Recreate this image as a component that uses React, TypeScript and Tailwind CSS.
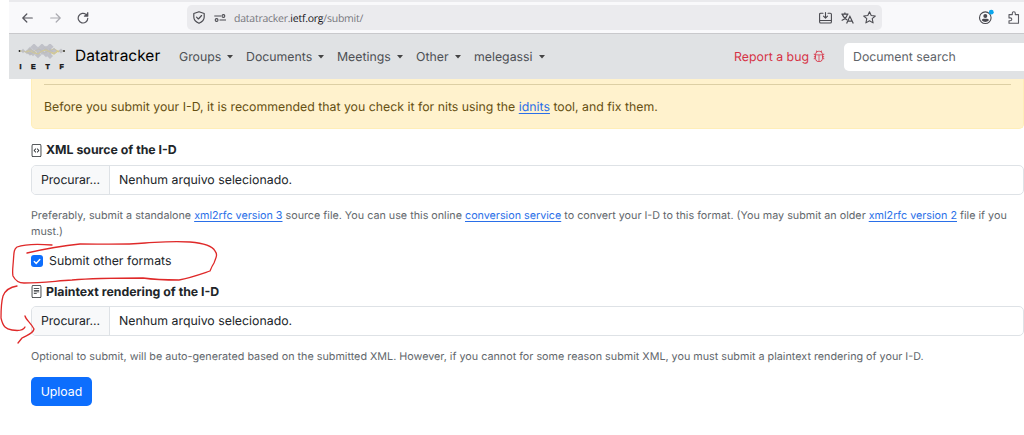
import React from "react";
import { BsBug, BsFileCode, BsFileText } from "react-icons/bs";

const link = "text-[#2a6fe8] underline decoration-1 underline-offset-2";

function Logo() {
  const diamonds: [number, number, number][] = [
    [5, 7, 2.2], [9, 8, 2.2], [12, 5.5, 2.8], [12, 9, 2.8], [16, 3, 3.6], [15, 9, 3.4],
    [20, 6, 3.6], [20, 11, 3.4], [24, 3, 3.6], [24, 8, 3],
    [28, 5, 3.4], [28, 10, 3.4], [32, 2.8, 3.6], [32, 7.5, 3.4], [32, 12, 3], [36, 7, 3.2], [43, 7, 2.6],
  ];
  return (
    <svg width="48" height="26" viewBox="0 0 48 26" className="shrink-0">
      <path d="M1 7H5L8 8L12 5L16 8L20 10L24 7L28 5L32 8L36 10L40 7H47M8 8L13 10L17 7L21 5L26 9L31 7L36 5L41 8" fill="none" stroke="#d8cb85" strokeWidth="1.2" />
      {diamonds.map(([x, y, r], i) => (
        <rect key={i} x={x - r * 0.7} y={y - r * 0.7} width={r * 1.4} height={r * 1.4} fill="#babbc3" fillOpacity="0.85" transform={`rotate(45 ${x} ${y})`} />
      ))}
      <path d="M8 8L12 7L16 9L20 10L24 7L28 6L32 8L36 9L40 7" fill="none" stroke="#d8cb85" strokeWidth="0.7" />
      <circle cx="1.5" cy="7" r="0.9" fill="#222" />
      <circle cx="46" cy="7" r="0.9" fill="#222" />
      <g fontFamily="Liberation Sans, sans-serif" fontWeight="700" fontSize="7" fill="#111" stroke="#111" strokeWidth="0.4">
        <text x="1.5" y="24.700">I</text>
        <text x="13" y="24.700">E</text>
        <text x="27.5" y="24.700">T</text>
        <text x="41.5" y="24.700">F</text>
      </g>
    </svg>
  );
}

function MenuItem({ label, width }: { label: string; width: string }) {
  return (
    <div className={`flex shrink-0 items-center ${width}`}>
      <span className="pt-[2px]">{label}</span>
      <svg width="6" height="4" viewBox="0 0 6 4" className="ml-[6px] shrink-0"><path d="M0 0H6L3 3.4Z" fill="#444" /></svg>
    </div>
  );
}

function BrowserBar() {
  return (
    <div className="flex h-[34px] shrink-0 flex-col border-b border-[#c9c9cc] bg-[#f9f9fb]">
      <div className="h-[2px] shrink-0 bg-[#eaeaed]" />
      <div className="flex flex-1 items-center">
        <svg width="11" height="10" viewBox="0 0 11 10" className="ml-[13px]" fill="none" stroke="#55555c" strokeWidth="1.2" strokeLinecap="round" strokeLinejoin="round"><path d="M10.3 5H.8M4.8 1L.8 5l4 4" /></svg>
        <svg width="11" height="10" viewBox="0 0 11 10" className="ml-[17px]" fill="none" stroke="#aaaab0" strokeWidth="1.2" strokeLinecap="round" strokeLinejoin="round"><path d="M.7 5h9.5M6.2 1l4 4-4 4" /></svg>
        <svg width="12" height="12" viewBox="0 0 12 12" className="ml-[16px]" fill="none" stroke="#55555c" strokeWidth="1.2" strokeLinecap="round"><path d="M10.8 6.3A4.8 4.8 0 1 1 9.2 2.6M7.4 4h3.2V.8" /><path d="M8.3 4h2.3V1.5Z" fill="#55555c" /></svg>
        <div className="ml-[98px] flex h-[25px] w-[695px] items-center rounded-[5px] bg-[#ebebee]">
          <svg width="12" height="13" viewBox="0 0 12 13" className="ml-[6px] shrink-0" fill="none" stroke="#4a4a50" strokeWidth="1.15" strokeLinejoin="round"><path d="M6 .7L11.2 2.5V6c0 3-2.3 5-5.2 6.3C3.100 11 .8 9 .8 6V2.500Z" /><path d="M3.500 6.200L5.400 8l3.200-3.500" strokeLinecap="round" /></svg>
          <svg width="12" height="8" viewBox="0 0 12 8" className="ml-[9px] shrink-0" fill="none" stroke="#4a4a50" strokeWidth="1.1"><path d="M.3 2H7M5.500 6H12" /><circle cx="9.400" cy="2" r="1.400" /><circle cx="2.600" cy="6" r="1.400" /></svg>
          <span className="mt-[3px] ml-[8px] whitespace-nowrap font-['Open_Sans',sans-serif] text-[10.500px] leading-4 tracking-[-0.24px] text-[#77777d]">datatracker.<span className="text-[#15141a]">ietf.org</span>/submit/</span>
          <div className="mr-[6px] ml-auto flex items-center gap-[9px] text-[#4a4a50]">
            <svg width="13" height="12" viewBox="0 0 13 12" fill="none" stroke="currentColor" strokeWidth="1.1" strokeLinecap="round" strokeLinejoin="round"><path d="M4 1.200H1.700Q.6 1.200.6 2.300V9.700Q.6 11 1.700 11H11.300Q12.400 11 12.400 9.700V2.300Q12.400 1.200 11.300 1.200H9M.7 8.500H12.300M6.500.6V6M4.500 4.200L6.500 6.200L8.500 4.200" /></svg>
            <svg width="13" height="12" viewBox="0 0 13 12" fill="none" stroke="currentColor" strokeWidth="1.200"><path d="M.4 2.200H7.400M3.900.5V2.200M1.300 2.200C2 5.500 4.500 7 6.200 8M6.500 2.200C5.800 5.500 3 7.500.7 8.500M5.600 11.500L8.900 4.300L12.300 11.500M6.800 9.200H11" /></svg>
            <svg width="13" height="13" viewBox="0 0 13 13" fill="none" stroke="currentColor" strokeWidth="1.05" strokeLinejoin="round"><path d="M6.500.8L8.200 4.500L12.300 5L9.200 7.700L10.100 11.900L6.500 9.800L2.900 11.900L3.800 7.700L.7 5L4.800 4.500Z" /></svg>
          </div>
        </div>
        <svg width="16" height="16" viewBox="0 0 16 16" className="mb-[1px] ml-[96px] shrink-0"><circle cx="7.300" cy="8.700" r="5.800" fill="none" stroke="#4a4a50" strokeWidth="1.100" /><circle cx="7.300" cy="7" r="2" fill="#4a4a50" /><path d="M3.700 11.300Q4 9.800 5.300 9.800H9.300Q10.700 9.800 11 11.300Q9.300 13 7.300 13T3.700 11.300" fill="#4a4a50" /><circle cx="13.300" cy="3.200" r="2.400" fill="#0aa5ec" /></svg>
        <svg width="12" height="13" viewBox="0 0 12 13" className="ml-[14px] shrink-0" fill="none" stroke="#5b5b62" strokeWidth="1.100" strokeLinejoin="round"><path d="M1 5.200V3.600H4.300V2.300Q4.300.7 5.800.7T7.300 2.300V3.600H10.500V12.300H1V9.700H2.200Q3.800 9.700 3.800 8.300T2.200 6.900H1Z" /></svg>
      </div>
    </div>
  );
}

function SiteNav() {
  return (
    <nav className="flex h-[45px] shrink-0 items-center bg-[#e0e2e4] text-[12.320px] text-[#4d5054]">
      <div className="ml-[9px]"><Logo /></div>
      <span className="mb-[2px] ml-[9px] w-[104px] shrink-0 text-[15.500px] leading-6 text-black">Datatracker</span>
      <MenuItem label="Groups" width="w-[67px]" />
      <MenuItem label="Documents" width="w-[91px]" />
      <MenuItem label="Meetings" width="w-[79px]" />
      <MenuItem label="Other" width="w-[58px]" />
      <MenuItem label="melegassi" width="w-[80px]" />
      <div className="ml-auto flex shrink-0 items-center gap-[4px] text-[#d63346]">
        <span className="pt-[2px]">Report a bug</span>
        <BsBug size={12} className="mb-px" />
      </div>
      <div className="ml-[19px] flex h-[28px] w-[180px] shrink-0 items-center rounded-l-[5px] bg-white pt-[2px] pl-[9px] text-[#606469]">Document search</div>
    </nav>
  );
}

function FileInput() {
  return (
    <div className="flex h-[30px] items-center overflow-hidden rounded-[5px] border border-[#dee2e6] pt-px text-[12.320px] text-[#212529]">
      <div className="-mt-px flex h-[29px] w-[78px] shrink-0 items-center border-r border-[#dee2e6] bg-[#f8f9fa] pt-px pl-[9px] tracking-[-0.1px]">Procurar...</div>
      <span className="pl-[9px]">Nenhum arquivo selecionado.</span>
    </div>
  );
}

function HandMarks() {
  return (
    <svg width="230" height="120" viewBox="0 0 230 120" className="pointer-events-none absolute top-[235px] left-0" fill="none" stroke="#df2929" strokeWidth="1.300" strokeLinecap="round" strokeLinejoin="round">
      <path d="M52 10C40 9 25 9 17 12C14 14 14 17 13.500 24C13 32 12 37 13 41C15 45 18 48 24 48C43 48 55 46 72 45C95 43 122 43 143 43C157 45 165 45 179 45C190 43 201 39 210 36Q212 31 214 28C216 22 218 20 215 16C212 10 202 8 190 7C170 6 163 7 145 8C123 10 103 9 80 9C60 11 40 15 27 18" />
      <path d="M17 51C10 52 5 56 3 61C1 68 1 75 1 83C3 92 6 94 12 95C18 96 23 96 25 92M25 81C26 85 31 88 34 94C33 99 27 100 22 103L18 108" />
    </svg>
  );
}

export default function App() {
  return (
    <div className="relative h-[435px] w-[1024px] overflow-hidden bg-white pl-[9px] font-['Inter',sans-serif] whitespace-nowrap [text-rendering:geometricPrecision]">
      <BrowserBar />
      <SiteNav />
      <main className="flex flex-col pl-[22px]">
        <div className="h-[50px] shrink-0 rounded-b-[5px] border-x border-b border-[#ffeeb8] bg-[#fff2cd] px-[12px] pt-[5px] text-[12.320px] text-[#665012]">
          <div className="border-t border-[#ddcfa4]" />
          <p className="mt-[12px] leading-5">Before you submit your I-D, it is recommended that you check it for nits using the <a className={link}>idnits</a> tool, and fix them.</p>
        </div>
        <div className="mt-[12px] mb-[6px] flex h-[18px] items-center gap-[3px] pt-px text-[12.320px] font-bold text-[#212529]"><BsFileCode size={13} className="mb-px -ml-px" />XML source of the I-D</div>
        <FileInput />
        <p className="mt-[13px] text-[10.750px] leading-[16px] text-[#62676c]">
          Preferably, submit a standalone <a className={link}>xml2rfc version 3</a> source file. You can use this online <a className={link}>conversion service</a> to convert your I-D to this format. (You may submit an older <a className={link}>xml2rfc version 2</a> file if you<br />must.)
        </p>
        <label className="mt-[12px] flex h-[18px] items-center text-[12.320px] text-[#212529]">
          <span className="mr-[6px] flex size-[12px] items-center justify-center rounded-[3px] bg-[#0d6efd]">
            <svg width="8" height="7" viewBox="0 0 8 7"><path d="M1.300 3.500L3.200 5.400L6.800 1.500" fill="none" stroke="white" strokeWidth="1.400" strokeLinecap="round" /></svg>
          </span>
          Submit other formats
        </label>
        <div className="mt-[13px] mb-[5px] flex h-[18px] items-center gap-[3px] text-[12.320px] font-bold text-[#212529]"><BsFileText size={13} className="mb-px -ml-px" />Plaintext rendering of the I-D</div>
        <FileInput />
        <p className="mt-[13px] text-[10.770px] leading-[16px] text-[#62676c]">Optional to submit, will be auto-generated based on the submitted XML. However, if you cannot for some reason submit XML, you must submit a plaintext rendering of your I-D.</p>
        <button className="mt-[12px] h-[29px] w-[61px] rounded-[5px] bg-[#0d6efd] pt-px text-[12.320px] text-white">Upload</button>
      </main>
      <HandMarks />
    </div>
  );
}
